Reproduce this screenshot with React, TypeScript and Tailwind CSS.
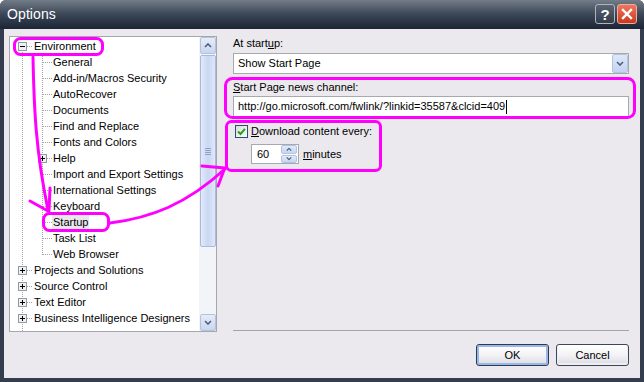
import React from "react"

type TreeRow = {
  label: string
  level: 0 | 1
  exp?: "+" | "-"
  first?: boolean
  last?: boolean
  selected?: boolean
}

const rows: TreeRow[] = [
  { label: "Environment", level: 0, exp: "-", first: true },
  { label: "General", level: 1 },
  { label: "Add-in/Macros Security", level: 1 },
  { label: "AutoRecover", level: 1 },
  { label: "Documents", level: 1 },
  { label: "Find and Replace", level: 1 },
  { label: "Fonts and Colors", level: 1 },
  { label: "Help", level: 1, exp: "+" },
  { label: "Import and Export Settings", level: 1 },
  { label: "International Settings", level: 1 },
  { label: "Keyboard", level: 1 },
  { label: "Startup", level: 1, selected: true },
  { label: "Task List", level: 1 },
  { label: "Web Browser", level: 1, last: true },
  { label: "Projects and Solutions", level: 0, exp: "+" },
  { label: "Source Control", level: 0, exp: "+" },
  { label: "Text Editor", level: 0, exp: "+" },
  { label: "Business Intelligence Designers", level: 0, exp: "+" },
  // next node is scrolled out of view, only its connector line shows
  { label: "", level: 0 },
]

type CellProps = {
  w: number
  x: number
  vert: "full" | "top" | "bottom" | "none"
  horiz?: boolean
  exp?: "+" | "-"
}

// one slice of the tree's dotted connector lines, 16px high
function TreeCell({ w, x, vert, horiz, exp }: CellProps) {
  const dot = "#a3a3a3"
  return (
    <svg width={w} height={16} className="block shrink-0" shapeRendering="crispEdges">
      {vert !== "none" && (
        <line
          x1={x + 0.5}
          x2={x + 0.5}
          y1={vert === "bottom" ? 8 : 0}
          y2={vert === "top" ? 9 : 16}
          stroke={dot}
          strokeDasharray="1 1"
        />
      )}
      {horiz && <line x1={x + 1} x2={w} y1={8.5} y2={8.5} stroke={dot} strokeDasharray="1 1" />}
      {exp && (
        <g>
          <rect x={x - 3.5} y={4.5} width={8} height={8} fill="#f1f1ee" stroke="#8e9aa8" />
          <line x1={x - 2} x2={x + 3} y1={8.5} y2={8.5} stroke="#000" />
          {exp === "+" && <line x1={x + 0.5} x2={x + 0.5} y1={6} y2={11} stroke="#000" />}
        </g>
      )}
    </svg>
  )
}

function Chevron({ up = false, className = "" }: { up?: boolean; className?: string }) {
  return (
    <svg width="8" height="5" viewBox="0 0 8 5" className={className}>
      <path
        d={up ? "M1 4 L4 1 L7 4" : "M1 1 L4 4 L7 1"}
        fill="none"
        stroke="#4d5f80"
        strokeWidth="1.6"
      />
    </svg>
  )
}

function ScrollButton({ up = false }: { up?: boolean }) {
  return (
    <div className="h-[17px] shrink-0 rounded-[2px] border border-[#b4c2dc] bg-linear-to-b from-[#e6edf9] to-[#c9d6f0] flex items-center justify-center">
      <Chevron up={up} />
    </div>
  )
}

function Scrollbar() {
  return (
    <div className="w-[17px] shrink-0 flex flex-col bg-[#f3f4f8] pl-px">
      <ScrollButton up />
      <div className="mt-px h-[192px] rounded-[2px] border border-[#a9badb] bg-linear-to-r from-[#e3eafa] via-[#c9d7f4] to-[#dfe7f9] flex flex-col items-center justify-center gap-[1px]">
        <div className="w-[6px] h-px bg-[#8ea3c9]" />
        <div className="w-[6px] h-px bg-[#8ea3c9]" />
        <div className="w-[6px] h-px bg-[#8ea3c9]" />
        <div className="w-[6px] h-px bg-[#8ea3c9]" />
      </div>
      <div className="flex-1" />
      <ScrollButton />
    </div>
  )
}

function Tree() {
  return (
    <div className="w-[208px] h-[296px] shrink-0 border border-[#a3a7ae] bg-white flex">
      <div className="flex-1 overflow-hidden pt-px">
        {rows.map((r, i) => (
          <div key={i} className="flex h-[16px] items-center whitespace-nowrap">
            {r.level === 0 ? (
              <TreeCell w={22} x={12} vert={r.first ? "bottom" : "full"} horiz={!!r.label} exp={r.exp} />
            ) : (
              <>
                <TreeCell w={22} x={12} vert="full" />
                <TreeCell w={20} x={10} vert={r.last ? "top" : "full"} horiz exp={r.exp} />
              </>
            )}
            {r.label && (
              <span
                className={
                  "px-[1px] leading-[16px] " +
                  (r.level === 0 ? "ml-[1px] " : "") +
                  (r.selected ? "bg-[#e9e8ed]" : "")
                }
              >
                {r.label}
              </span>
            )}
          </div>
        ))}
      </div>
      <Scrollbar />
    </div>
  )
}

function DialogButton({ label, primary = false }: { label: string; primary?: boolean }) {
  return (
    <button
      className={
        "w-[73px] h-[22px] rounded-[3px] border bg-linear-to-b from-white via-[#f3f3f6] to-[#dadbe2] flex items-center justify-center " +
        (primary
          ? "border-[#2c3a55] shadow-[inset_0_0_0_2px_#9ab7e8]"
          : "border-[#3d4759] shadow-[inset_0_-1px_0_1px_#eceef3]")
      }
    >
      {label}
    </button>
  )
}

function Annotations() {
  return (
    <svg
      className="absolute inset-0 pointer-events-none"
      width={644}
      height={382}
      fill="none"
      stroke="#ff00ff"
      strokeWidth={3}
      strokeLinecap="round"
      strokeLinejoin="round"
    >
      <rect x={14.5} y={38.5} width={88} height={16} rx={6} />
      <path d="M33 57 C34 110 36 152 48 210" />
      <path d="M30 201 L48 211 M50 188 L49 211" />
      <rect x={43.5} y={213.5} width={65} height={17} rx={6} />
      <path d="M110 223 C150 218 186 205 226 168" />
      <path d="M202 166 L225 168 M218 186 L224 170" />
      <rect x={225.5} y={78.5} width={409} height={39} rx={7} />
      <rect x={226.5} y={121.5} width={154} height={49} rx={5} />
    </svg>
  )
}

export default function App() {
  return (
    <div className="relative w-[644px] h-[382px] overflow-hidden rounded-t-[6px] bg-[#343d4d] flex flex-col font-['Liberation_Sans',Arial,sans-serif] text-[11px] text-black">
      {/* title bar */}
      <div className="h-[29px] shrink-0 flex items-center pl-[7px] pr-[7px] bg-linear-to-b from-[#737c88] via-[#3b4656] to-[#1c2535]">
        <span className="text-white text-[14px] tracking-[0.1px]">Options</span>
        <div className="ml-auto flex gap-[2px] mt-[-1px]">
          <div className="w-[20px] h-[20px] rounded-[3px] border border-[#aeb5bf] bg-linear-to-b from-[#5c6573] to-[#333c4a] flex items-center justify-center text-white text-[15px] font-bold leading-none">
            ?
          </div>
          <div className="w-[20px] h-[20px] rounded-[3px] border border-[#e7b0a4] bg-linear-to-b from-[#f0765a] to-[#c9361c] flex items-center justify-center">
            <svg width="12" height="12" viewBox="0 0 12 12">
              <path d="M2 2 L10 10 M10 2 L2 10" stroke="#fff" strokeWidth="2.4" strokeLinecap="square" />
            </svg>
          </div>
        </div>
      </div>

      {/* client area */}
      <div className="flex-1 mx-[4px] mb-[4px] bg-[#ebe9ee] flex flex-col">
        <div className="flex pt-[7px] pl-[5px] pr-[11px]">
          <Tree />

          <div className="ml-[16px] flex-1 h-[296px] flex flex-col">
            <div className="h-[14px] leading-[14px]">
              At start<span className="underline">u</span>p:
            </div>
            <div className="mt-[3px] h-[21px] border border-[#a5a9b0] bg-white flex items-center">
              <span className="pl-[4px] flex-1">Show Start Page</span>
              <div className="w-[16px] h-[19px] rounded-[2px] border border-[#b3c3e0] bg-linear-to-b from-[#dfe8f8] to-[#c3d3f1] flex items-center justify-center">
                <Chevron />
              </div>
            </div>

            <div className="mt-[6px] h-[14px] leading-[14px]">
              <span className="underline">S</span>tart Page news channel:
            </div>
            <div className="mt-[2px] h-[21px] border border-[#a5a9b0] bg-white flex items-center pl-[4px]">
              <span>http://go.microsoft.com/fwlink/?linkid=35587&amp;clcid=409</span>
              <span className="inline-block w-px h-[14px] bg-black ml-px" />
            </div>

            <div className="mt-[8px] ml-[2px] h-[13px] flex items-center">
              <div className="w-[13px] h-[13px] border border-[#2a4f79] bg-linear-to-br from-[#dcdcd6] to-white flex items-center justify-center">
                <svg width="9" height="9" viewBox="0 0 9 9">
                  <path d="M1 4.5 L3.5 7 L8 1.8" fill="none" stroke="#21a121" strokeWidth="2" />
                </svg>
              </div>
              <span className="ml-[3px]">
                <span className="underline">D</span>ownload content every:
              </span>
            </div>

            <div className="mt-[6px] ml-[18px] flex items-center">
              <div className="w-[48px] h-[20px] border border-[#a5a9b0] bg-white flex items-center">
                <span className="pl-[5px] flex-1">60</span>
                <div className="w-[16px] h-[18px] flex flex-col gap-px mr-px">
                  <div className="flex-1 rounded-[2px] border border-[#b3c3e0] bg-linear-to-b from-[#e2eaf9] to-[#c6d5f1] flex items-center justify-center">
                    <Chevron up className="scale-75" />
                  </div>
                  <div className="flex-1 rounded-[2px] border border-[#b3c3e0] bg-linear-to-b from-[#e2eaf9] to-[#c6d5f1] flex items-center justify-center">
                    <Chevron className="scale-75" />
                  </div>
                </div>
              </div>
              <span className="ml-[4px]">
                <span className="underline">m</span>inutes
              </span>
            </div>

            <div className="mt-auto mb-px h-px bg-[#a4a4aa]" />
          </div>
        </div>

        <div className="mt-[12px] pr-[11px] flex justify-end gap-[7px]">
          <DialogButton label="OK" primary />
          <DialogButton label="Cancel" />
        </div>
      </div>

      <Annotations />
    </div>
  )
}
